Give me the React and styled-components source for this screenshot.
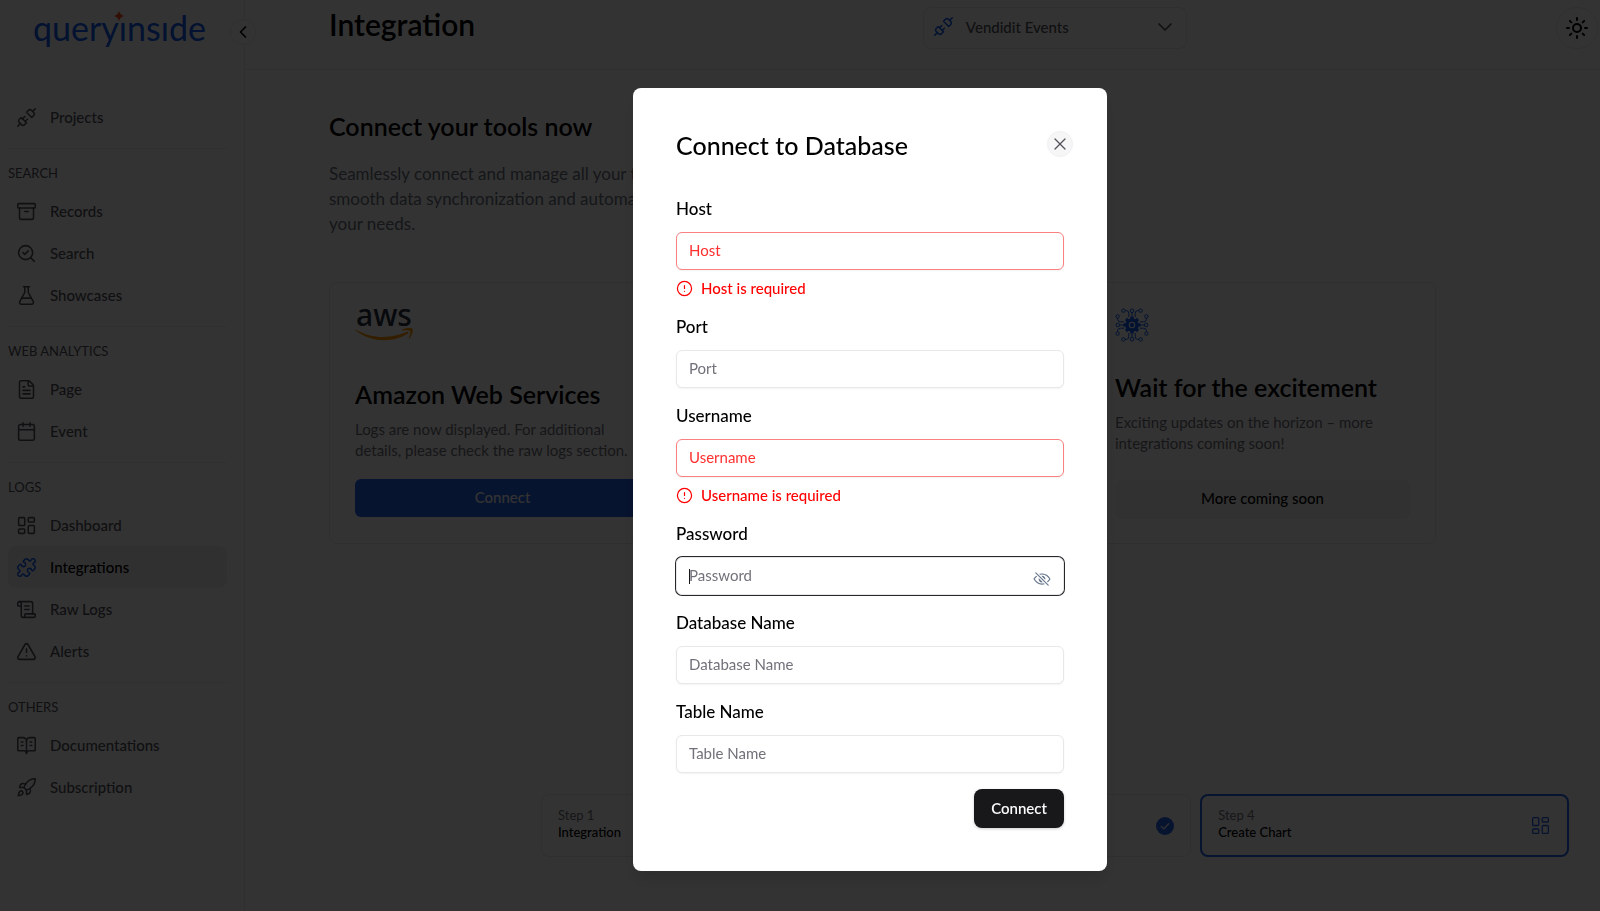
import React, { useState } from "react";
import styled, { createGlobalStyle } from "styled-components";
import {
  Archive,
  BookOpenText,
  Calendar,
  ChevronDown,
  ChevronLeft,
  CircleAlert,
  FileText,
  FlaskConical,
  LayoutDashboard,
  Puzzle,
  Rocket,
  ScrollText,
  SearchCheck,
  Sun,
  TriangleAlert,
  Unplug,
  X,
} from "lucide-react";
import { IoEyeOffOutline } from "react-icons/io5";

const GlobalStyle = createGlobalStyle`
  * {
    box-sizing: border-box;
  }

  body {
    margin: 0;
    background: #ffffff;
    color: #000000;
    font-family: Lato, "Liberation Sans", sans-serif;
    overflow: hidden;
  }

  h1, h2, h3, p {
    margin: 0;
  }

  button, input, select {
    font-family: inherit;
  }
`;

const Page = styled.div`
  display: flex;
  min-height: 100vh;
`;

const Sidebar = styled.aside`
  width: 245px;
  flex-shrink: 0;
  border-right: 1px solid #ebebee;
`;

const SidebarTop = styled.div`
  position: relative;
  height: 96px;
  padding: 5px 0 0 33px;
`;

const LogoText = styled.a`
  position: relative;
  display: inline-block;
  color: #0d5cf0;
  font-size: 34px;
  line-height: 46px;
  text-decoration: none;
`;

const LogoStar = styled.svg`
  position: absolute;
  left: 81px;
  top: 6px;
`;

const CollapseButton = styled.button`
  position: absolute;
  top: 19px;
  right: -12px;
  display: flex;
  align-items: center;
  justify-content: center;
  width: 26px;
  height: 26px;
  padding: 0;
  border: 1px solid #ebebee;
  border-radius: 50%;
  background: #ffffff;
`;

const NavGroup = styled.div`
  margin: 0 17px 0 8px;
  padding-bottom: 10px;

  & + & {
    border-top: 1px solid #f0f0f2;
    padding-top: 16px;
  }
`;

const NavTitle = styled.p`
  margin-bottom: 9px;
  color: #52525b;
  font-size: 13px;
  line-height: 16px;
`;

const NavLink = styled.a`
  display: flex;
  align-items: center;
  gap: 13px;
  height: 42px;
  padding: 0 8px;
  border-radius: 8px;
  background: ${({ $active }) => ($active ? "#f1f1f3" : "transparent")};
  color: ${({ $active }) => ($active ? "#000000" : "#52525b")};
  font-size: 15px;
  font-weight: 500;
  text-decoration: none;

  svg {
    color: ${({ $active }) => ($active ? "#0d5cf0" : "inherit")};
  }
`;

const Main = styled.main`
  display: flex;
  flex: 1;
  flex-direction: column;
`;

const Header = styled.header`
  display: grid;
  grid-template-columns: 13fr 264px 9fr;
  height: 70px;
  padding: 7px 2px 0 84px;
  border-bottom: 1px solid #ebebee;
`;

const PageTitle = styled.h1`
  font-size: 30px;
  font-weight: 600;
  line-height: 35px;
`;

const ProjectButton = styled.button`
  display: flex;
  align-items: center;
  gap: 12px;
  height: 42px;
  padding: 0 9px 3px;
  border: 1px solid #ebebee;
  border-radius: 8px;
  background: #ffffff;
  color: #52525b;
  font-size: 15px;
  font-weight: 500;

  svg:first-child {
    color: #0d5cf0;
  }

  svg:last-child {
    margin-left: auto;
  }
`;

const ThemeButton = styled.button`
  display: flex;
  align-items: center;
  justify-content: center;
  justify-self: end;
  width: 42px;
  height: 42px;
  padding: 0;
  border: 1px solid #ebebee;
  border-radius: 50%;
  background: #ffffff;
`;

const Content = styled.section`
  flex: 1;
  padding: 39px 164px 0 84px;
`;

const SectionTitle = styled.h2`
  font-size: 25px;
  font-weight: 600;
  line-height: 34px;
`;

const Intro = styled.p`
  margin: 18px 0 46px;
  color: #6b7280;
  font-size: 17px;
  line-height: 25px;
`;

const Cards = styled.div`
  display: grid;
  grid-template-columns: repeat(3, 1fr);
  gap: 33px;
`;

const Card = styled.article`
  display: flex;
  flex-direction: column;
  height: 262px;
  padding: 4px 25px 24px;
  border: 1px solid #ebebee;
  border-radius: 8px;
`;

const CardIcon = styled.div`
  display: flex;
  align-items: flex-end;
  height: 56px;
`;

const CardTitle = styled.h3`
  margin-top: ${({ $compact }) => ($compact ? "28px" : "34px")};
  font-size: 25px;
  font-weight: 600;
  line-height: 34px;
  white-space: nowrap;
`;

const CardText = styled.p`
  margin-top: 8px;
  color: #71717a;
  font-size: 15px;
  line-height: 21px;
  white-space: nowrap;
`;

const CardButton = styled.button`
  height: ${({ $muted }) => ($muted ? "40px" : "38px")};
  margin-top: ${({ $muted }) => ($muted ? "26px" : "18px")};
  padding: 0 0 2px;
  border: 0;
  border-radius: 6px;
  background: ${({ $muted }) => ($muted ? "#f5f5f6" : "#2563eb")};
  color: ${({ $muted }) => ($muted ? "#000000" : "#fafafa")};
  font-size: 15px;
  font-weight: 500;
`;

const Steps = styled.div`
  display: grid;
  grid-template-columns: 4fr 4fr 4fr 7fr;
  gap: 9px;
  padding: 0 31px 54px 296px;
`;

const Step = styled.div`
  display: flex;
  align-items: center;
  justify-content: space-between;
  height: 63px;
  padding: 0 16px;
  border: ${({ $current }) =>
    $current ? "2px solid #2563eb" : "1px solid #ebebee"};
  border-radius: 8px;
`;

const StepText = styled.div`
  padding-bottom: 3px;
  font-size: 13px;
  line-height: 17px;
`;

const StepNumber = styled.p`
  color: #71717a;
`;

const StepName = styled.p`
  font-weight: 500;
`;

const Overlay = styled.div`
  position: fixed;
  inset: 0;
  display: flex;
  align-items: flex-start;
  justify-content: center;
  padding: 88px 0 0 140px;
  background: rgba(0, 0, 0, 0.8);
`;

const Dialog = styled.form`
  width: 474px;
  padding: 43px;
  border-radius: 8px;
  background: #ffffff;
  box-shadow: 0 10px 16px rgba(0, 0, 0, 0.1);
`;

const DialogHeader = styled.div`
  display: flex;
  align-items: flex-start;
  justify-content: space-between;
  height: 28px;
  margin: 0 -9px 38px 0;
`;

const DialogTitle = styled.h2`
  font-size: 25px;
  font-weight: 500;
  line-height: 28px;
`;

const CloseButton = styled.button`
  display: flex;
  align-items: center;
  justify-content: center;
  width: 26px;
  height: 26px;
  padding: 0;
  border: 1px solid #f0f0f2;
  border-radius: 50%;
  background: #f6f6f7;
  color: #52525b;
`;

const Field = styled.div`
  margin-bottom: 16px;
`;

const Label = styled.label`
  display: block;
  margin-bottom: 11px;
  font-size: 17px;
  font-weight: 500;
  line-height: 24px;
`;

const InputWrap = styled.div`
  position: relative;
`;

const Input = styled.input`
  display: block;
  width: 100%;
  height: 38px;
  padding: 0 12px 2px;
  border: 1px solid ${({ $error }) => ($error ? "#fb8080" : "#e8e8ea")};
  border-radius: 6px;
  outline: none;
  background: #ffffff;
  box-shadow: ${({ $focused }) =>
    $focused ? "0 0 0 1px #27272a" : "0 1px 2px rgba(0, 0, 0, 0.05)"};
  font-size: 15px;

  &::placeholder {
    color: ${({ $error }) => ($error ? "#ff2f2f" : "#71717a")};
    opacity: 1;
  }
`;

const Caret = styled.span`
  position: absolute;
  top: 12px;
  left: 13px;
  width: 1px;
  height: 15px;
  background: #18181b;
`;

const RevealButton = styled.button`
  position: absolute;
  top: 13px;
  right: 13px;
  display: flex;
  padding: 0;
  border: 0;
  background: transparent;
  color: #64748b;
`;

const ErrorText = styled.p`
  display: flex;
  align-items: center;
  gap: 8px;
  margin-top: 8px;
  color: #ff0000;
  font-size: 15px;
  font-weight: 500;
  line-height: 21px;
`;

const SubmitButton = styled.button`
  display: block;
  height: 39px;
  margin-left: auto;
  padding: 0 17px 2px;
  border: 0;
  border-radius: 8px;
  background: #18181b;
  color: #fafafa;
  font-size: 15px;
  font-weight: 600;
  box-shadow: 0 1px 3px rgba(0, 0, 0, 0.2);
`;

const navGroups = [
  { items: [{ name: "Projects", icon: Unplug }] },
  {
    title: "SEARCH",
    items: [
      { name: "Records", icon: Archive },
      { name: "Search", icon: SearchCheck },
      { name: "Showcases", icon: FlaskConical },
    ],
  },
  {
    title: "WEB ANALYTICS",
    items: [
      { name: "Page", icon: FileText },
      { name: "Event", icon: Calendar },
    ],
  },
  {
    title: "LOGS",
    items: [
      { name: "Dashboard", icon: LayoutDashboard },
      { name: "Integrations", icon: Puzzle, active: true },
      { name: "Raw Logs", icon: ScrollText },
      { name: "Alerts", icon: TriangleAlert },
    ],
  },
  {
    title: "OTHERS",
    items: [
      { name: "Documentations", icon: BookOpenText },
      { name: "Subscription", icon: Rocket },
    ],
  },
];

const fields = [
  { id: "host", label: "Host", error: "Host is required" },
  { id: "port", label: "Port" },
  { id: "username", label: "Username", error: "Username is required" },
  { id: "password", label: "Password", secret: true },
  { id: "database", label: "Database Name" },
  { id: "table", label: "Table Name" },
];

function Logo() {
  return (
    <LogoText href="#home">
      queryınsıde
      <LogoStar width="10" height="10" viewBox="0 0 10 10" fill="#ff4b2b">
        <path d="M5 0 Q6.2 3.8 10 5 Q6.2 6.2 5 10 Q3.8 6.2 0 5 Q3.8 3.8 5 0Z" />
      </LogoStar>
    </LogoText>
  );
}

function AwsLogo() {
  return (
    <svg
      width="60"
      height="56"
      viewBox="0 -20 60 56"
      role="img"
      aria-label="aws"
    >
      <text
        x="1"
        y="19"
        fontFamily="Noto Sans, Open Sans, sans-serif"
        fontSize="30"
        fontWeight="500"
        fill="#252f3e"
      >
        aws
      </text>
      <path
        d="M0.4 22.4 C17 32 36 32 52 24.8 C53.6 24.2 54.4 25.6 53 26.6 C38 36.4 15 35.6 0.2 23 C-0.1 22.6 0.1 22.2 0.4 22.4Z"
        fill="#ff9900"
      />
      <path
        d="M47 22.6 C50 20.6 56.6 20.6 57.6 21.8 C58.4 23 57.2 28.6 54.6 31.4 C54 32 53.6 31.8 53.8 31 C54.6 29 56 25 55.2 24 C54.4 23 50.4 23.2 47.6 23.4 C46.8 23.4 46.6 23 47 22.6Z"
        fill="#ff9900"
      />
    </svg>
  );
}

function CircuitGear() {
  const quarter = [0, 90, 180, 270];
  const teeth = [0, 45, 90, 135, 180, 225, 270, 315];

  return (
    <svg width="34" height="34" viewBox="-17 -17 34 34" fill="none">
      <g stroke="#0d5cf0" strokeWidth="1">
        {quarter.map((angle) => (
          <g key={angle} transform={`rotate(${angle})`}>
            <circle cx="0" cy="-14.2" r="1.8" />
            <circle cx="-8.6" cy="-14.4" r="1.7" />
            <circle cx="8.6" cy="-14.4" r="1.7" />
            <path d="M0 -12.4V-8M-6.9 -14.4H-5.6Q-3.2 -14.2 -3.2 -11.6V-8M6.9 -14.4H5.6Q3.2 -14.2 3.2 -11.6V-8" />
          </g>
        ))}
      </g>
      <g fill="#0d5cf0">
        {teeth.map((angle) => (
          <rect
            key={angle}
            x="-1.7"
            y="-8.4"
            width="3.4"
            height="4"
            transform={`rotate(${angle})`}
          />
        ))}
      </g>
      <circle r="5" stroke="#0d5cf0" strokeWidth="3.6" />
      <circle r="2.2" fill="#0d5cf0" />
    </svg>
  );
}

function DoneBadge() {
  return (
    <svg width="18" height="18" viewBox="0 0 18 18" fill="none">
      <circle cx="9" cy="9" r="9" fill="#2563eb" />
      <path d="M5 9.2L7.8 12L13 6.4" stroke="#ffffff" strokeWidth="1.2" />
    </svg>
  );
}

function DatabaseField({ field }) {
  const [visible, setVisible] = useState(false);

  return (
    <Field>
      <Label htmlFor={field.id}>{field.label}</Label>
      <InputWrap>
        <Input
          id={field.id}
          name={field.id}
          type={field.secret && !visible ? "password" : "text"}
          placeholder={field.label}
          $error={Boolean(field.error)}
          $focused={field.secret}
        />
        {field.secret && (
          <>
            <Caret />
            <RevealButton
              type="button"
              aria-label="Show password"
              onClick={() => setVisible(!visible)}
            >
              <IoEyeOffOutline size={18} />
            </RevealButton>
          </>
        )}
      </InputWrap>
      {field.error && (
        <ErrorText>
          <CircleAlert size={17} strokeWidth={1.75} />
          {field.error}
        </ErrorText>
      )}
    </Field>
  );
}

function ConnectDialog() {
  return (
    <Overlay>
      <Dialog
        role="dialog"
        aria-labelledby="dialog-title"
        onSubmit={(event) => event.preventDefault()}
      >
        <DialogHeader>
          <DialogTitle id="dialog-title">Connect to Database</DialogTitle>
          <CloseButton type="button" aria-label="Close">
            <X size={20} strokeWidth={1.5} />
          </CloseButton>
        </DialogHeader>
        {fields.map((field) => (
          <DatabaseField key={field.id} field={field} />
        ))}
        <SubmitButton>Connect</SubmitButton>
      </Dialog>
    </Overlay>
  );
}

function App() {
  return (
    <>
      <GlobalStyle />
      <Page>
        <Sidebar>
          <SidebarTop>
            <Logo />
            <CollapseButton aria-label="Collapse sidebar">
              <ChevronLeft size={20} />
            </CollapseButton>
          </SidebarTop>
          <nav>
            {navGroups.map((group) => (
              <NavGroup key={group.title || "main"}>
                {group.title && <NavTitle>{group.title}</NavTitle>}
                {group.items.map(({ name, icon: Icon, active }) => (
                  <NavLink key={name} href="#nav" $active={active}>
                    <Icon size={21} strokeWidth={1.75} />
                    {name}
                  </NavLink>
                ))}
              </NavGroup>
            ))}
          </nav>
        </Sidebar>
        <Main>
          <Header>
            <PageTitle>Integration</PageTitle>
            <ProjectButton>
              <Unplug size={21} strokeWidth={1.75} />
              Vendidit Events
              <ChevronDown size={24} strokeWidth={1.75} />
            </ProjectButton>
            <ThemeButton aria-label="Change theme">
              <Sun size={24} />
            </ThemeButton>
          </Header>
          <Content>
            <SectionTitle>Connect your tools now</SectionTitle>
            <Intro>
              Seamlessly connect and manage all your tools,
              <br />
              smooth data synchronization and automation
              <br />
              your needs.
            </Intro>
            <Cards>
              <Card>
                <CardIcon>
                  <AwsLogo />
                </CardIcon>
                <CardTitle>Amazon Web Services</CardTitle>
                <CardText>
                  Logs are now displayed. For additional
                  <br />
                  details, please check the raw logs section.
                </CardText>
                <CardButton>Connect</CardButton>
              </Card>
              <Card />
              <Card>
                <CardIcon>
                  <CircuitGear />
                </CardIcon>
                <CardTitle $compact>Wait for the excitement</CardTitle>
                <CardText>
                  Exciting updates on the horizon – more
                  <br />
                  integrations coming soon!
                </CardText>
                <CardButton $muted>More coming soon</CardButton>
              </Card>
            </Cards>
          </Content>
          <Steps>
            <Step>
              <StepText>
                <StepNumber>Step 1</StepNumber>
                <StepName>Integration</StepName>
              </StepText>
            </Step>
            <Step />
            <Step>
              <StepText />
              <DoneBadge />
            </Step>
            <Step $current>
              <StepText>
                <StepNumber>Step 4</StepNumber>
                <StepName>Create Chart</StepName>
              </StepText>
              <LayoutDashboard size={21} strokeWidth={1.5} color="#2563eb" />
            </Step>
          </Steps>
        </Main>
      </Page>
      <ConnectDialog />
    </>
  );
}

export default App;
